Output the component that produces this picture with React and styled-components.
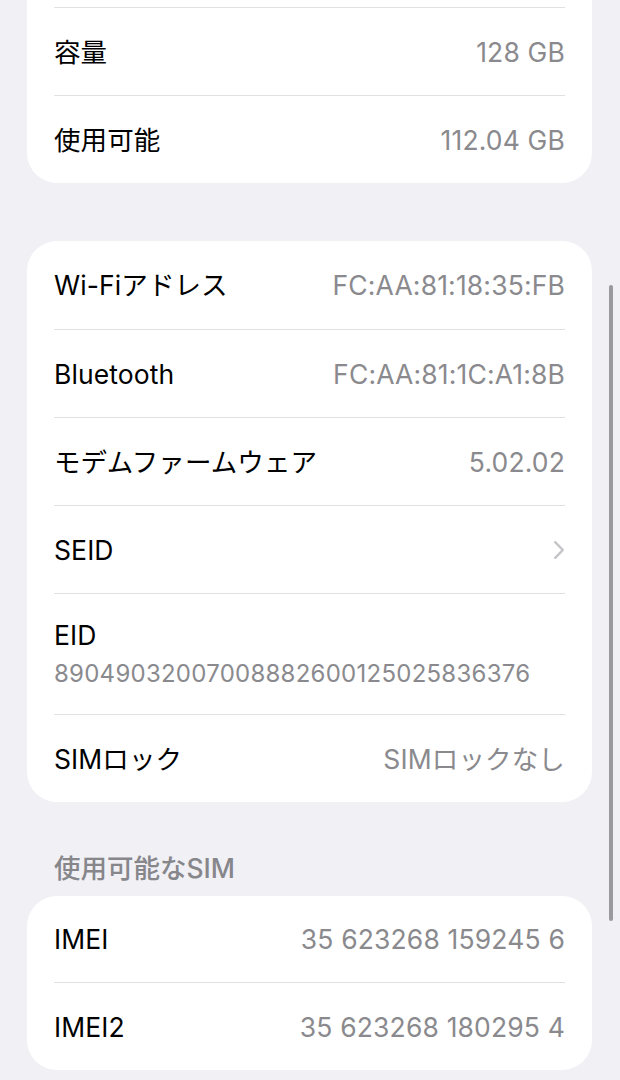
import React from "react";
import styled, { createGlobalStyle } from "styled-components";

const Global = createGlobalStyle`
  html, body { margin: 0; padding: 0; background: #f0f0f5; }
  body {
    font-family: "Inter", "Noto Sans CJK JP", sans-serif;
    -webkit-font-smoothing: antialiased;
  }
`;

const Page = styled.div`
  position: relative;
  width: 620px;
  height: 1080px;
  overflow: hidden;
  background: #f0f0f5;
  padding: 0 28px 0 27px;
  box-sizing: border-box;
  display: flex;
  flex-direction: column;
`;

const Card = styled.div`
  background: #ffffff;
  border-radius: ${(p) => (p.$continued ? "0 0 30px 30px" : "30px")};
  padding: ${(p) => (p.$continued ? "7px 27px 0" : "0 27px")};
  margin-bottom: ${(p) => p.$mb || 0}px;
  display: flex;
  flex-direction: column;
  flex-shrink: 0;
`;

const Row = styled.div`
  box-sizing: border-box;
  height: ${(p) => p.$h || 88}px;
  display: flex;
  flex-direction: ${(p) => (p.$stacked ? "column" : "row")};
  align-items: ${(p) => (p.$stacked ? "flex-start" : "center")};
  justify-content: ${(p) => (p.$stacked ? "center" : "space-between")};
  gap: ${(p) => (p.$stacked ? "8px" : "0")};
  border-top: ${(p) => (p.$first ? "none" : "1px solid #e1e1e5")};
`;

const Label = styled.span`
  font-size: 26.5px;
  line-height: 32px;
  color: #000;
  letter-spacing: 0.1px;
`;

const Value = styled.span`
  font-size: 26.5px;
  line-height: 32px;
  color: #8a8a8e;
  letter-spacing: 0.15px;
`;

const SubValue = styled.span`
  font-size: 24px;
  line-height: 30px;
  color: #8a8a8e;
  letter-spacing: 0.25px;
`;

const Header = styled.div`
  font-size: 26.5px;
  line-height: 30px;
  font-weight: 500;
  color: #86868b;
  padding: 0 0 13px 27px;
  flex-shrink: 0;
`;

const Chevron = styled.svg`
  width: 12px;
  height: 20px;
`;

const ScrollIndicator = styled.div`
  position: absolute;
  right: 7px;
  top: 285px;
  width: 4.5px;
  height: 636px;
  border-radius: 3px;
  background: #9a9a9e;
`;

function InfoRow({ label, value, first, chevron, h }) {
  return (
    <Row $first={first} $h={h}>
      <Label>{label}</Label>
      {chevron ? (
        <Chevron viewBox="0 0 12 20" fill="none">
          <path d="M2.2 2.2L9.8 10L2.2 17.8" stroke="#c4c4c8" strokeWidth="2.4" strokeLinecap="round" strokeLinejoin="round" />
        </Chevron>
      ) : (
        <Value>{value}</Value>
      )}
    </Row>
  );
}

export default function App() {
  return (
    <>
      <Global />
      <Page>
        <Card $continued $mb={58}>
          <InfoRow label="容量" value="128 GB" />
          <InfoRow label="使用可能" value="112.04 GB" />
        </Card>
        <Card $mb={51}>
          <InfoRow first label="Wi-Fiアドレス" value="FC:AA:81:18:35:FB" />
          <InfoRow label="Bluetooth" value="FC:AA:81:1C:A1:8B" />
          <InfoRow label="モデムファームウェア" value="5.02.02" />
          <InfoRow label="SEID" chevron />
          <Row $stacked $h={121}>
            <Label>EID</Label>
            <SubValue>89049032007008882600125025836376</SubValue>
          </Row>
          <InfoRow label="SIMロック" value="SIMロックなし" />
        </Card>
        <Header>使用可能なSIM</Header>
        <Card>
          <InfoRow first h={86} label="IMEI" value="35 623268 159245 6" />
          <InfoRow label="IMEI2" value="35 623268 180295 4" />
        </Card>
        <ScrollIndicator />
      </Page>
    </>
  );
}
